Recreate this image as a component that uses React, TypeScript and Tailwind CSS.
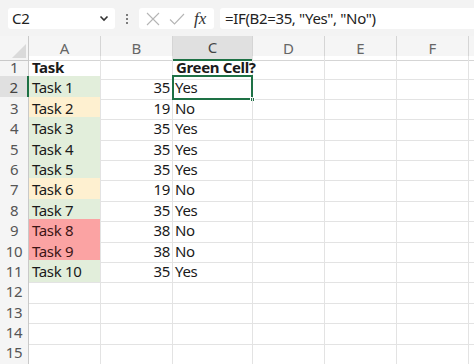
import React from "react";

type Row = { task: string; val: number | null; res: string; fill: string };

const rows: Row[] = [
  { task: "Task 1", val: 35, res: "Yes", fill: "bg-[#e2eedb]" },
  { task: "Task 2", val: 19, res: "No", fill: "bg-[#fef0d0]" },
  { task: "Task 3", val: 35, res: "Yes", fill: "bg-[#e2eedb]" },
  { task: "Task 4", val: 35, res: "Yes", fill: "bg-[#e2eedb]" },
  { task: "Task 5", val: 35, res: "Yes", fill: "bg-[#e2eedb]" },
  { task: "Task 6", val: 19, res: "No", fill: "bg-[#fef0d0]" },
  { task: "Task 7", val: 35, res: "Yes", fill: "bg-[#e2eedb]" },
  { task: "Task 8", val: 38, res: "No", fill: "bg-[#fba3a3]" },
  { task: "Task 9", val: 38, res: "No", fill: "bg-[#fba3a3]" },
  { task: "Task 10", val: 35, res: "Yes", fill: "bg-[#e2eedb]" },
];

const font = { fontFamily: '"Noto Sans", "Open Sans", sans-serif' };

function Cell({ className = "", children }: { className?: string; children?: React.ReactNode }) {
  return (
    <div className={`h-full border-r border-b border-[#e3e3e3] flex items-center overflow-visible whitespace-nowrap ${className}`}>
      {children}
    </div>
  );
}

function FormulaBar() {
  return (
    <div className="h-[36px] bg-[#f3f3f3] flex items-start pt-[8px] pl-[8px] gap-[6px]">
      <div className="w-[107px] h-[21px] bg-white rounded-[3px] flex items-center justify-between pl-[4px] pr-[6px]">
        <span className="text-[15px] text-[#222] tracking-[-0.3px]">C2</span>
        <svg width="10" height="7" viewBox="0 0 10 7">
          <path d="M1.5 1.5 L5 5 L8.5 1.5" fill="none" stroke="#333" strokeWidth="1.6" />
        </svg>
      </div>
      <div className="w-[12px] h-[21px] flex flex-col items-center justify-center gap-[2px]">
        <span className="w-[2px] h-[2px] bg-[#555] rounded-full" />
        <span className="w-[2px] h-[2px] bg-[#555] rounded-full" />
        <span className="w-[2px] h-[2px] bg-[#555] rounded-full" />
      </div>
      <div className="w-[75px] h-[21px] bg-white rounded-[3px] flex items-center pl-[7px] gap-[9px]">
        <svg width="14" height="14" viewBox="0 0 14 14">
          <path d="M1 1 L13 13 M13 1 L1 13" stroke="#b5b5b5" strokeWidth="1.1" />
        </svg>
        <svg width="16" height="12" viewBox="0 0 16 12">
          <path d="M1 6.5 L5.5 11 L15 1" fill="none" stroke="#b5b5b5" strokeWidth="1.1" />
        </svg>
        <span className="text-[17px] italic text-[#333] leading-none" style={{ fontFamily: '"Liberation Serif", serif' }}>
          fx
        </span>
      </div>
      <div className="flex-1 h-[21px] bg-white rounded-l-[3px] flex items-center pl-[5px]">
        <span className="text-[15px] text-[#222] tracking-[-0.35px]">=IF(B2=35, "Yes", "No")</span>
      </div>
    </div>
  );
}

export default function App() {
  const cols = ["A", "B", "C", "D", "E", "F"];
  const grid = "grid grid-cols-[29px_72px_72px_80px_72px_72px_72px_5px]";
  return (
    <div className="w-[474px] h-[364px] overflow-hidden bg-white" style={font}>
      <FormulaBar />
      <div className={`${grid} h-[20px] bg-[#f5f5f5]`}>
        <div className="h-full border-r border-b border-[#c9c9c9] relative">
          <div
            className="absolute right-[2px] bottom-[2px] w-0 h-0 border-l-[14px] border-l-transparent border-b-[14px] border-b-[#dadada]"
          />
        </div>
        {cols.map((c) => (
          <div
            key={c}
            className={`h-full flex items-center justify-center text-[15px] ${
              c === "C"
                ? "bg-[#e0e0e0] border-b-2 border-b-[#1e7145] border-r border-r-[#d5d5d5] text-[#444]"
                : "border-r border-b border-[#d5d5d5] text-[#666]"
            }`}
          >
            {c}
          </div>
        ))}
        <div className="h-full border-b border-[#d5d5d5]" />
      </div>
      {Array.from({ length: 15 }, (_, i) => {
        const n = i + 1;
        const r = n >= 2 && n <= 11 ? rows[n - 2] : null;
        const hdrSel = n === 2;
        return (
          <div key={n} className={`${grid} h-[20.4px] text-[15px] tracking-[-0.35px] text-[#1a1a1a]`}>
            <div
              className={`h-full flex items-center justify-center text-[15px] border-b border-[#d5d5d5] ${
                hdrSel
                  ? "bg-[#e0e0e0] border-r-2 border-r-[#1e7145] text-[#444]"
                  : "bg-[#f5f5f5] border-r border-r-[#c9c9c9] text-[#555]"
              }`}
            >
              {n}
            </div>
            {n === 1 ? (
              <>
                <Cell className="pl-[3px] font-bold">Task</Cell>
                <Cell />
                <Cell className="pl-[3px] font-bold">Green Cell?</Cell>
              </>
            ) : r ? (
              <>
                <Cell className={`pl-[3px] ${r.fill} ${r.fill === "bg-[#fba3a3]" ? "text-[#3d1414]" : ""}`}>{r.task}</Cell>
                <Cell className="justify-end pr-[2px]">{r.val}</Cell>
                <Cell className="pl-[2px] relative">
                  {r.res}
                  {n === 2 && (
                    <div className="absolute -left-px -top-px right-[-1px] bottom-[-1px] border-2 border-[#1e7145]">
                      <div className="absolute -right-[4px] -bottom-[4px] w-[5px] h-[5px] bg-[#1e7145] border border-white" />
                    </div>
                  )}
                </Cell>
              </>
            ) : (
              <>
                <Cell />
                <Cell />
                <Cell />
              </>
            )}
            <Cell />
            <Cell />
            <Cell />
            <div className="h-full border-b border-[#e3e3e3]" />
          </div>
        );
      })}
    </div>
  );
}
